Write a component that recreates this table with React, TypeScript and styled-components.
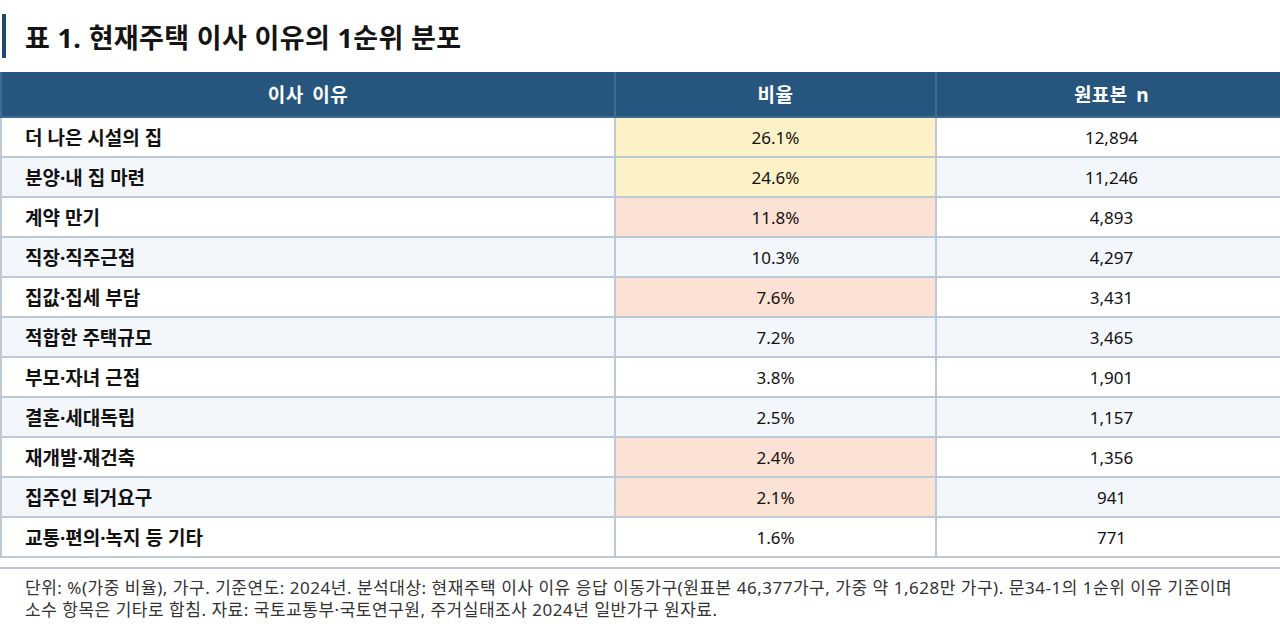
import React from "react";
import styled, { createGlobalStyle } from "styled-components";

const Global = createGlobalStyle`
  html, body { margin: 0; padding: 0; background: #ffffff; }
  body { font-family: "Noto Sans", "Noto Sans CJK KR", sans-serif; color: #111; }
`;

const Page = styled.div`
  width: 1280px;
  padding-top: 14px;
  box-sizing: border-box;
`;

const TitleRow = styled.div`
  display: flex;
  align-items: center;
  height: 44px;
  margin-left: 2px;
  border-left: 4px solid #1f4a70;
  padding-left: 19px;
  margin-bottom: 14px;
`;

const Title = styled.h1`
  margin: 0;
  font-size: 27px;
  font-weight: 700;
  color: #141414;
  letter-spacing: 0.35px;
`;

const Table = styled.table`
  width: 1280px;
  border-collapse: collapse;
  table-layout: fixed;
  font-size: 17px;
`;

const HeadCell = styled.th<{ w: number }>`
  width: ${(p) => p.w}px;
  height: 44px;
  padding: 0;
  background: #26567e;
  color: #ffffff;
  font-weight: 700;
  font-size: 19px;
  letter-spacing: 0.5px;
  word-spacing: 3px;
  text-align: center;
  border: 2px solid #3f6b90;
  border-top: none;
`;

const Row = styled.tr<{ alt: boolean }>`
  background: ${(p) => (p.alt ? "#f3f6fa" : "#ffffff")};
`;

const Cell = styled.td<{ tone?: "y" | "p"; label?: boolean }>`
  height: 40px;
  padding: 0 ${(p) => (p.label ? "23px" : "0")};
  box-sizing: border-box;
  border: 2px solid #bccad8;
  text-align: ${(p) => (p.label ? "left" : "center")};
  font-weight: ${(p) => (p.label ? 700 : 400)};
  font-size: ${(p) => (p.label ? "19px" : "17px")};
  color: #111;
  background: ${(p) => (p.tone === "y" ? "#fdf2c7" : p.tone === "p" ? "#fbe2d4" : "transparent")};
`;

const Footer = styled.div`
  margin-top: 9px;
  border-top: 2px solid #b9c7d6;
  padding: 8px 25px 0 25px;
  font-size: 17px;
  letter-spacing: 0.52px;
  line-height: 22px;
  color: #333;
`;

type R = { label: string; pct: string; n: string; tone?: "y" | "p" };

const rows: R[] = [
  { label: "더 나은 시설의 집", pct: "26.1%", n: "12,894", tone: "y" },
  { label: "분양·내 집 마련", pct: "24.6%", n: "11,246", tone: "y" },
  { label: "계약 만기", pct: "11.8%", n: "4,893", tone: "p" },
  { label: "직장·직주근접", pct: "10.3%", n: "4,297" },
  { label: "집값·집세 부담", pct: "7.6%", n: "3,431", tone: "p" },
  { label: "적합한 주택규모", pct: "7.2%", n: "3,465" },
  { label: "부모·자녀 근접", pct: "3.8%", n: "1,901" },
  { label: "결혼·세대독립", pct: "2.5%", n: "1,157" },
  { label: "재개발·재건축", pct: "2.4%", n: "1,356", tone: "p" },
  { label: "집주인 퇴거요구", pct: "2.1%", n: "941", tone: "p" },
  { label: "교통·편의·녹지 등 기타", pct: "1.6%", n: "771" },
];

export default function App() {
  return (
    <Page>
      <Global />
      <TitleRow>
        <Title>표 1. 현재주택 이사 이유의 1순위 분포</Title>
      </TitleRow>
      <Table>
        <thead>
          <tr>
            <HeadCell w={612}>이사 이유</HeadCell>
            <HeadCell w={319}>비율</HeadCell>
            <HeadCell w={349}>원표본 n</HeadCell>
          </tr>
        </thead>
        <tbody>
          {rows.map((r, i) => (
            <Row key={r.label} alt={i % 2 === 1}>
              <Cell label>{r.label}</Cell>
              <Cell tone={r.tone}>{r.pct}</Cell>
              <Cell>{r.n}</Cell>
            </Row>
          ))}
        </tbody>
      </Table>
      <Footer>
        단위: %(가중 비율), 가구. 기준연도: 2024년. 분석대상: 현재주택 이사 이유 응답 이동가구(원표본 46,377가구, 가중 약 1,628만 가구). 문34-1의 1순위 이유 기준이며
        <br />
        소수 항목은 기타로 합침. 자료: 국토교통부·국토연구원, 주거실태조사 2024년 일반가구 원자료.
      </Footer>
    </Page>
  );
}
